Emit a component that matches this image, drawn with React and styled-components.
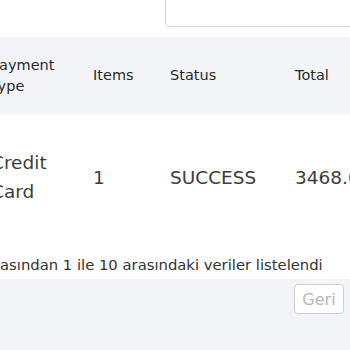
import React from 'react'
import styled, { createGlobalStyle } from 'styled-components'

const GlobalStyle = createGlobalStyle`
  body {
    margin: 0;
    background: #fff;
    overflow: hidden;
    font-family: "DejaVu Sans", "Noto Sans", sans-serif;
    color: #333;
  }
`;

const Page = styled.div`
  width: 350px;
  height: 350px;
  overflow: hidden;
  display: flex;
  flex-direction: column;
`;

const Toolbar = styled.div`
  display: flex;
  justify-content: flex-end;
  margin-top: -14px;
  margin-right: -30px;
`;

const SearchInput = styled.input`
  width: 215px;
  height: 41px;
  box-sizing: border-box;
  border: 1px solid #d4d4d4;
  border-radius: 4px;
  background: #fff;
  outline: none;
`;

const Table = styled.div`
  margin-top: 10px;
  margin-left: -9px;
  width: 400px;
`;

const Row = styled.div`
  display: grid;
  grid-template-columns: 102px 77px 125px 1fr;
  align-items: center;
  height: ${p => p.$height}px;
  background: ${p => p.$head ? '#f3f4f7' : '#fff'};
  font-size: ${p => p.$head ? '14.5px' : '18.5px'};
  line-height: ${p => p.$head ? '21px' : '29px'};
  color: ${p => p.$head ? '#2a2a2a' : '#3d3d3d'};
`;

const Cell = styled.div`
  padding-right: 6px;
`;

const Info = styled.div`
  font-size: 14.8px;
  line-height: 20px;
  margin-top: 15px;
  color: #333;
  white-space: nowrap;
`;

const Footer = styled.div`
  margin-top: 4px;
  flex: 1;
  background: #f3f4f7;
  display: flex;
  justify-content: flex-end;
  align-items: flex-start;
  padding: 5px 6px 0 0;
`;

const PageButton = styled.button`
  font-family: inherit;
  font-size: 16px;
  color: #b8b8b8;
  background: #fff;
  border: 1px solid #cfcfcf;
  border-radius: 4px;
  width: 50px;
  height: 30px;
  padding: 0;
`;

const columns = ['Payment Type', 'Items', 'Status', 'Total']
const rows = [['Credit Card', '1', 'SUCCESS', '3468.00']]

export default function App() {
  return (
    <Page>
      <GlobalStyle />
      <Toolbar>
        <SearchInput />
      </Toolbar>
      <Table>
        <Row $head $height={77}>
          {columns.map(c => <Cell key={c}>{c}</Cell>)}
        </Row>
        {rows.map((r, i) => (
          <Row key={i} $height={126}>
            {r.map((v, j) => <Cell key={j}>{v}</Cell>)}
          </Row>
        ))}
      </Table>
      <Info>asından 1 ile 10 arasındaki veriler listelendi</Info>
      <Footer>
        <PageButton>Geri</PageButton>
      </Footer>
    </Page>
  )
}
